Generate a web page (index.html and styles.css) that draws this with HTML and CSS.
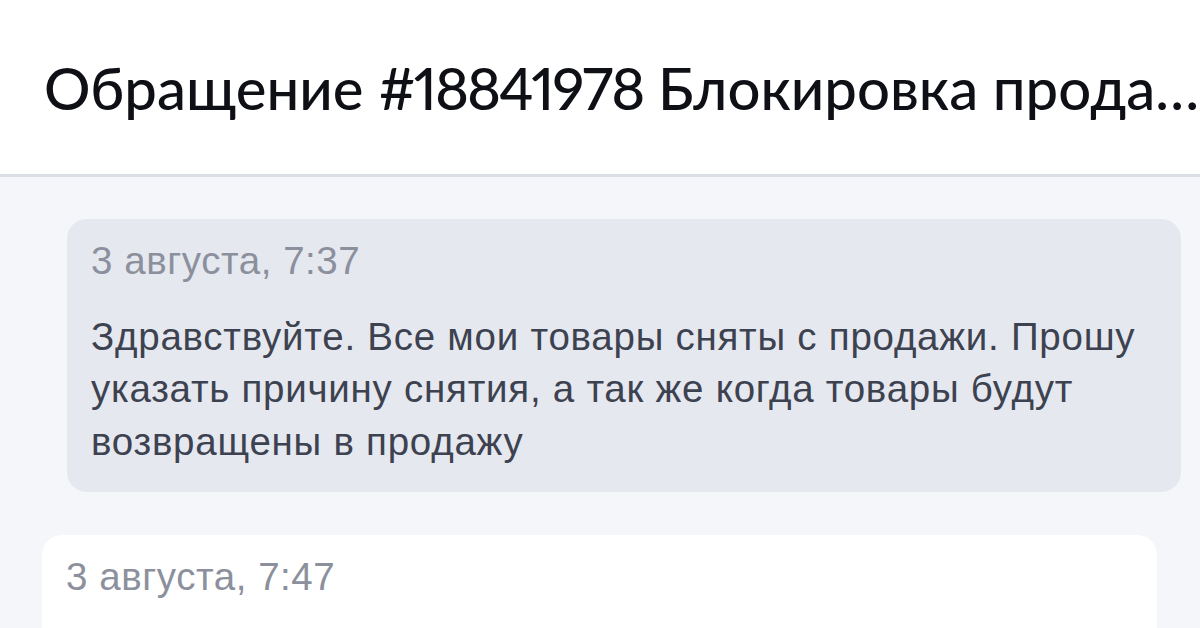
FILE: index.html
```html
<!DOCTYPE html>
<html lang="ru">
<head>
<meta charset="utf-8">
<link rel="stylesheet" href="styles.css">
</head>
<body>
<header class="header">
  <h1 class="title">Обращение <span class="num">#18841978</span> Блокировка продажи товаров</h1>
</header>
<main class="chat">
  <div class="msg msg-user">
    <div class="msg-date">3 августа, 7:37</div>
    <div class="msg-text">Здравствуйте. Все мои товары сняты с продажи. Прошу указать причину снятия, а так же когда товары будут возвращены в продажу</div>
  </div>
  <div class="msg msg-support">
    <div class="msg-date">3 августа, 7:47</div>
    <div class="msg-text">Добрый день!</div>
  </div>
</main>
</body>
</html>
```
FILE: styles.css
```css
html, body {
  margin: 0;
  padding: 0;
  height: 100%;
  overflow: hidden;
}
body {
  background: #f5f6fa;
  font-family: "Liberation Sans", Arial, sans-serif;
}
.header {
  background: #ffffff;
  height: 177px;
  border-bottom: 3px solid #dcdee6;
  box-sizing: border-box;
  display: flex;
  align-items: center;
  padding: 1px 0 0 44px;
}
.title {
  margin: 0;
  font-family: Lato, "Open Sans", sans-serif;
  font-weight: 500;
  font-size: 58px;
  color: #0e1016;
  white-space: nowrap;
  overflow: hidden;
  text-overflow: ellipsis;
  min-width: 0;
}
.num {
  font-variant-numeric: proportional-nums;
  letter-spacing: -2px;
}
.chat {
  display: flex;
  flex-direction: column;
  gap: 43px;
  padding: 42px 19px 0 42px;
}
.msg {
  border-radius: 20px;
  padding: 19px 24px 24px;
}
.msg-user {
  background: #e6e8ef;
  margin-left: 25px;
}
.msg-support {
  background: #ffffff;
  margin-right: 24px;
}
.msg-date {
  font-size: 38.5px;
  letter-spacing: 0.55px;
  color: #8b909c;
  line-height: 46px;
}
.msg-text {
  margin-top: 26.5px;
  font-size: 38.5px;
  letter-spacing: 0.75px;
  line-height: 52.5px;
  color: #3d4250;
}
```
